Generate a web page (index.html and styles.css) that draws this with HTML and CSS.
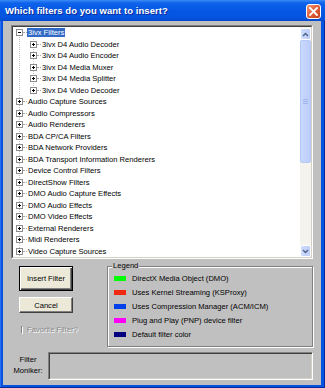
FILE: index.html
```html
<!DOCTYPE html>
<html>
<head>
<meta charset="utf-8">
<title>Which filters do you want to insert?</title>
<link rel="stylesheet" href="styles.css">
</head>
<body>
<div class="window">
  <div class="titlebar">
    <span class="title">Which filters do you want to insert?</span>
    <span class="close"><svg width="9" height="9" viewBox="0 0 9 9"><path d="M1 1 L8 8 M8 1 L1 8" stroke="#fff" stroke-width="1.8" stroke-linecap="square"/></svg></span>
  </div>
  <div class="client">
    <div class="tree">
      <div class="tree-in">
        <div class="items">
          <div class="node l0"><span class="exp"></span><span class="dash"></span><span class="label sel">3ivx Filters</span></div>
          <div class="children">
            <div class="node l1"><span class="exp plus"></span><span class="dash"></span><span class="label">3ivx D4 Audio Decoder</span></div>
            <div class="node l1"><span class="exp plus"></span><span class="dash"></span><span class="label">3ivx D4 Audio Encoder</span></div>
            <div class="node l1"><span class="exp plus"></span><span class="dash"></span><span class="label">3ivx D4 Media Muxer</span></div>
            <div class="node l1"><span class="exp plus"></span><span class="dash"></span><span class="label">3ivx D4 Media Splitter</span></div>
            <div class="node l1"><span class="exp plus"></span><span class="dash"></span><span class="label">3ivx D4 Video Decoder</span></div>
          </div>
          <div class="node l0"><span class="exp plus"></span><span class="dash"></span><span class="label">Audio Capture Sources</span></div>
          <div class="node l0"><span class="exp plus"></span><span class="dash"></span><span class="label">Audio Compressors</span></div>
          <div class="node l0"><span class="exp plus"></span><span class="dash"></span><span class="label">Audio Renderers</span></div>
          <div class="node l0"><span class="exp plus"></span><span class="dash"></span><span class="label">BDA CP/CA Filters</span></div>
          <div class="node l0"><span class="exp plus"></span><span class="dash"></span><span class="label">BDA Network Providers</span></div>
          <div class="node l0"><span class="exp plus"></span><span class="dash"></span><span class="label">BDA Transport Information Renderers</span></div>
          <div class="node l0"><span class="exp plus"></span><span class="dash"></span><span class="label">Device Control Filters</span></div>
          <div class="node l0"><span class="exp plus"></span><span class="dash"></span><span class="label">DirectShow Filters</span></div>
          <div class="node l0"><span class="exp plus"></span><span class="dash"></span><span class="label">DMO Audio Capture Effects</span></div>
          <div class="node l0"><span class="exp plus"></span><span class="dash"></span><span class="label">DMO Audio Effects</span></div>
          <div class="node l0"><span class="exp plus"></span><span class="dash"></span><span class="label">DMO Video Effects</span></div>
          <div class="node l0"><span class="exp plus"></span><span class="dash"></span><span class="label">External Renderers</span></div>
          <div class="node l0"><span class="exp plus"></span><span class="dash"></span><span class="label">Midi Renderers</span></div>
          <div class="node l0"><span class="exp plus"></span><span class="dash"></span><span class="label">Video Capture Sources</span></div>
        </div>
        <div class="scroll">
          <div class="sb-btn"><svg width="7" height="5" viewBox="0 0 7 5"><polyline points="1,4 3.5,1.5 6,4" fill="none" stroke="#4d6185" stroke-width="1.4"/></svg></div>
          <div class="thumb"><svg width="5" height="5" viewBox="0 0 5 5"><path d="M0 0.5 H5 M0 2.5 H5 M0 4.5 H5" stroke="#9fb6ec" stroke-width="1"/></svg></div>
          <div class="track"></div>
          <div class="sb-btn"><svg width="7" height="5" viewBox="0 0 7 5"><polyline points="1,1 3.5,3.5 6,1" fill="none" stroke="#4d6185" stroke-width="1.4"/></svg></div>
        </div>
      </div>
    </div>

    <div class="middle">
      <div class="actions">
        <button class="btn default">Insert Filter</button>
        <button class="btn cancel">Cancel</button>
        <div class="check"><span class="cbox"></span><span class="clabel">Favorite Filter?</span></div>
      </div>
      <div class="group">
        <div class="group-title">Legend</div>
        <div class="legend-row"><span class="swatch green"></span>DirectX Media Object (DMO)</div>
        <div class="legend-row"><span class="swatch red"></span>Uses Kernel Streaming (KSProxy)</div>
        <div class="legend-row"><span class="swatch blue"></span>Uses Compression Manager (ACM/ICM)</div>
        <div class="legend-row"><span class="swatch magenta"></span>Plug and Play (PNP) device filter</div>
        <div class="legend-row"><span class="swatch navy"></span>Default filter color</div>
      </div>
    </div>

    <div class="moniker">
      <div class="mlabel">Filter<br>Moniker:</div>
      <div class="mbox"></div>
    </div>
  </div>
</div>
</body>
</html>
```
FILE: styles.css
```css
* { box-sizing: border-box; }
html, body { margin: 0; padding: 0; }
body {
  width: 325px;
  height: 388px;
  overflow: hidden;
  font-family: "Liberation Sans", Arial, sans-serif;
  font-size: 7.6px;
  color: #000;
  background: #0553e0;
}
.window {
  width: 325px;
  height: 388px;
  display: flex;
  flex-direction: column;
  background: #0553e0;
  box-shadow: inset -1px -1px 0 #0a2a9c, inset 1px 0 0 #2a6ff0;
}
.titlebar {
  height: 21px;
  flex: none;
  display: flex;
  align-items: center;
  justify-content: space-between;
  padding: 0 4px 0 5px;
  background: linear-gradient(to bottom, #3b8cf8 0, #0f62ea 3px, #0558e4 50%, #0454de 85%, #0448cc 100%);
}
.title {
  color: #fff;
  font-weight: bold;
  font-size: 9.5px;
  text-shadow: 1px 1px 0 #0b2a96;
  letter-spacing: 0.05px;
}
.close {
  width: 15px;
  height: 15px;
  margin-top: 1px;
  border: 1px solid #fff;
  border-radius: 3px;
  background: linear-gradient(135deg, #f29c7e 0, #e0623d 45%, #c7401c 100%);
  display: flex;
  align-items: center;
  justify-content: center;
}
.client {
  flex: 1;
  margin: 0 4px 3px 3px;
  background: #c0c0c0;
  padding: 4px 8px 0 8px;
  display: flex;
  flex-direction: column;
}
.tree {
  height: 234px;
  flex: none;
  display: flex;
  border: 1px solid;
  border-color: #808080 #ffffff #ffffff #808080;
}
.tree-in {
  flex: 1;
  display: flex;
  background: #fff;
  border: 1px solid;
  border-color: #404040 #d4d0c8 #d4d0c8 #404040;
  overflow: hidden;
}
.items {
  flex: 1;
  overflow: hidden;
  background-image: repeating-linear-gradient(to bottom, #c4c4c4 0, #c4c4c4 1px, transparent 1px, transparent 2px);
  background-size: 1px 100%;
  background-position: 6px 6px;
  background-repeat: no-repeat;
}
.children {
  background-image: repeating-linear-gradient(to bottom, #c4c4c4 0, #c4c4c4 1px, transparent 1px, transparent 2px);
  background-size: 1px 52px;
  background-position: 20px 0;
  background-repeat: no-repeat;
}
.node {
  height: 11.5px;
  display: flex;
  align-items: center;
  white-space: nowrap;
}
.node.l0 { padding-left: 3px; }
.node.l1 { padding-left: 17px; }
.exp {
  flex: none;
  width: 7px;
  height: 7px;
  border: 1px solid #8c8c8c;
  background: #fff;
  position: relative;
}
.exp::before {
  content: "";
  position: absolute;
  left: 1px;
  top: 2px;
  width: 3px;
  height: 1px;
  background: #000;
}
.exp.plus::after {
  content: "";
  position: absolute;
  left: 2px;
  top: 1px;
  width: 1px;
  height: 3px;
  background: #000;
}
.dash {
  flex: none;
  width: 4px;
  height: 1px;
  border-top: 1px dotted #a8a8a8;
}
.label {
  padding: 0 1px;
  line-height: 9px;
}
.sel {
  background: #316ac5;
  color: #fff;
}
.scroll {
  width: 11px;
  flex: none;
  display: flex;
  flex-direction: column;
  background: #f4f3ee;
  padding-top: 1px;
}
.sb-btn {
  height: 12px;
  flex: none;
  background: linear-gradient(to right, #cfdcfd, #bccdf8);
  border: 1px solid #ffffff;
  border-radius: 2px;
  display: flex;
  align-items: center;
  justify-content: center;
}
.thumb {
  height: 123px;
  flex: none;
  background: linear-gradient(to right, #c9d8fd, #bccdf9);
  border: 1px solid #b4c8f5;
  border-radius: 2px;
  display: flex;
  align-items: center;
  justify-content: center;
}
.track { flex: 1; }

.middle {
  display: flex;
  justify-content: space-between;
  align-items: flex-start;
  margin-top: 2px;
}
.actions {
  width: 54px;
  margin-left: 8px;
  margin-top: 5px;
  display: flex;
  flex-direction: column;
}
.btn {
  width: 54px;
  padding: 0;
  font-family: inherit;
  font-size: 7.6px;
  color: #000;
  background: #ece9d8;
  border: 1px solid;
  border-color: #ffffff #404040 #404040 #ffffff;
  box-shadow: inset -1px -1px 0 #808080;
  display: flex;
  align-items: center;
  justify-content: center;
}
.btn.default {
  height: 25px;
  border-color: #000;
  box-shadow: inset 1px 1px 0 #fff, inset -1px -1px 0 #404040, inset -2px -2px 0 #808080;
}
.btn.cancel {
  height: 16px;
  margin-top: 6px;
}
.check {
  margin-top: 12px;
  margin-left: 2px;
  display: flex;
  align-items: center;
}
.cbox {
  width: 8px;
  height: 8px;
  border: 1px solid;
  border-color: #808080 #ffffff #ffffff #808080;
  background: #d0d0d0;
}
.clabel {
  margin-left: 4px;
  color: #8a8a8a;
  text-shadow: 1px 1px 0 #fff;
  white-space: nowrap;
}
.group {
  width: 206px;
  margin-top: 5px;
  border: 1px solid #808080;
  box-shadow: inset 1px 1px 0 #fff, 1px 1px 0 #fff;
  padding: 0 0 5px 6px;
}
.group-title {
  width: fit-content;
  margin: -6px 0 0 -2px;
  padding: 0 1px;
  line-height: 10px;
  background: #c0c0c0;
}
.legend-row {
  height: 14px;
  display: flex;
  align-items: center;
  white-space: nowrap;
}
.swatch {
  width: 12px;
  height: 5px;
  margin-right: 6px;
  flex: none;
}
.green { background: #00ff00; }
.red { background: #f02810; }
.blue { background: #0040e8; }
.magenta { background: #ff00ff; }
.navy { background: #000080; }

.moniker {
  display: flex;
  margin-top: 5px;
}
.mlabel {
  width: 34px;
  text-align: center;
  line-height: 11px;
  padding-top: 2px;
}
.mbox {
  width: 265px;
  height: 28px;
  margin-left: 3px;
  border: 1px solid;
  border-color: #808080 #ffffff #ffffff #808080;
  box-shadow: inset 1px 1px 0 #404040, inset -1px -1px 0 #d4d0c8;
  background: #c0c0c0;
}
```
